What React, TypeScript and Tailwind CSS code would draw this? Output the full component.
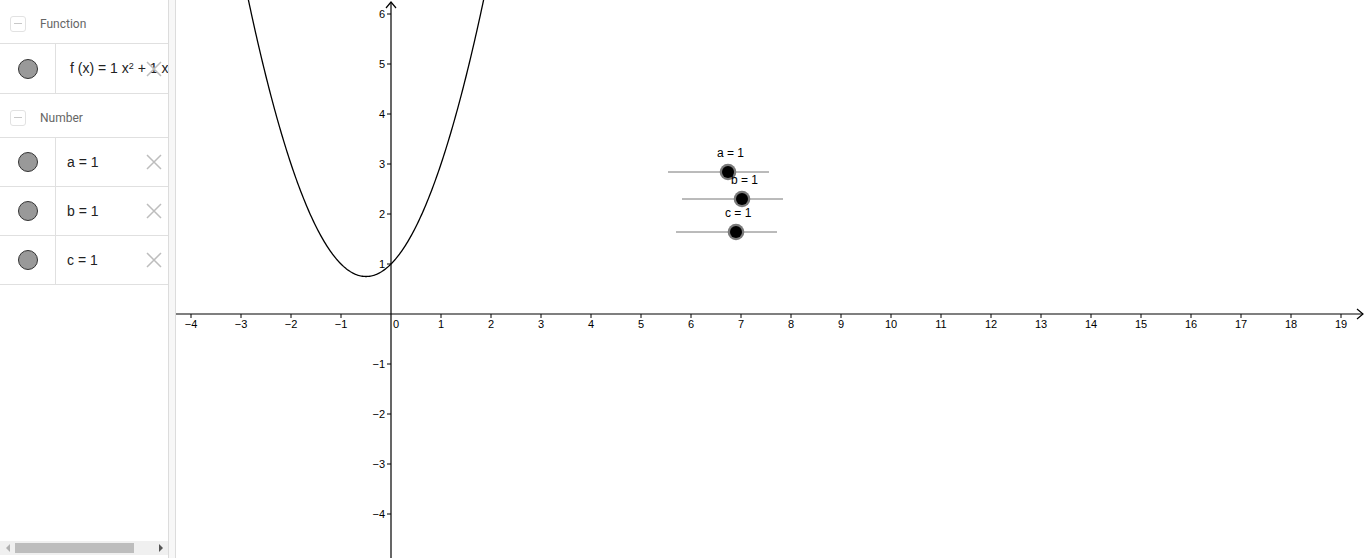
import React from 'react';

const OX = 391;
const OY = 314;
const U = 50;

const f = (x: number) => x * x + x + 1;

function parabolaPath() {
  const pts: string[] = [];
  for (let x = -2.95; x <= 1.95; x += 0.02) {
    const px = OX + x * U;
    const py = OY - f(x) * U;
    pts.push(`${pts.length ? 'L' : 'M'}${px.toFixed(2)},${py.toFixed(2)}`);
  }
  return pts.join(' ');
}

const minus = (n: number) => (n < 0 ? `\u2212${Math.abs(n)}` : `${n}`);

function XIcon() {
  return (
    <svg width="18" height="18" viewBox="0 0 18 18" className="block">
      <path d="M2 2 L16 16 M16 2 L2 16" stroke="#bdbdbd" strokeWidth="1.5" />
    </svg>
  );
}

function Dot() {
  return <div className="w-[20px] h-[20px] rounded-full bg-[#999999] border border-[#333333]" />;
}

function Header({ label }: { label: string }) {
  return (
    <div className="h-[44px] pt-[4px] flex items-center border-b border-[#e0e0e0]">
      <div className="ml-[10px] w-[16px] h-[16px] rounded-[3px] border border-[#e2e2e2] flex items-center justify-center">
        <div className="w-[8px] h-[1.5px] bg-[#c8c8c8]" />
      </div>
      <span className="ml-[14px] text-[12px] text-[#666666]" style={{ fontFamily: 'Roboto, sans-serif' }}>
        {label}
      </span>
    </div>
  );
}

function Row({ children, h = 49, pl = 11 }: { children: React.ReactNode; h?: number; pl?: number }) {
  return (
    <div className="relative flex border-b border-[#e0e0e0]" style={{ height: h }}>
      <div className="w-[56px] shrink-0 flex items-center justify-center border-r border-[#e0e0e0]">
        <Dot />
      </div>
      <div
        className="flex-1 flex items-center overflow-hidden whitespace-nowrap text-[14px] text-[#222222]"
        style={{ fontFamily: '"Liberation Sans", Arial, sans-serif', paddingLeft: pl }}
      >
        {children}
      </div>
      <div className="absolute right-[5px] top-1/2 -translate-y-1/2">
        <XIcon />
      </div>
    </div>
  );
}

function Slider({ x, y, label, lx, ly }: { x: number; y: number; label: string; lx: number; ly: number }) {
  return (
    <g>
      <line x1={x} y1={y} x2={x + 101} y2={y} stroke="#777777" strokeWidth="1" />
      <circle cx={x + 60} cy={y} r="8.3" fill="#7a7a7a" />
      <circle cx={x + 60} cy={y} r="6" fill="#000000" />
      <text x={lx} y={ly} fontSize="12" fill="#000" fontFamily="'Liberation Sans', Arial, sans-serif">
        {label}
      </text>
    </g>
  );
}

function Graph() {
  const xs: number[] = [];
  for (let i = -4; i <= 19; i++) if (i !== 0) xs.push(i);
  const ys: number[] = [];
  for (let j = -4; j <= 6; j++) if (j !== 0) ys.push(j);
  return (
    <svg viewBox="176 0 1190 558" width="1190" height="558" className="block">
      <rect x="176" y="0" width="1190" height="558" fill="#ffffff" />
      <line x1="176" y1={OY} x2="1363" y2={OY} stroke="#000" strokeWidth="1.2" />
      <path d="M1357,309 L1363,314 L1357,319" fill="none" stroke="#000" strokeWidth="1.2" />
      <line x1={OX} y1="2" x2={OX} y2="558" stroke="#000" strokeWidth="1.2" />
      <path d={`M${OX - 5},8 L${OX},2 L${OX + 5},8`} fill="none" stroke="#000" strokeWidth="1.2" />
      <g fontFamily="'Liberation Sans', Arial, sans-serif" fontSize="11" fill="#000">
        {xs.map((i) => (
          <g key={`x${i}`}>
            <line x1={OX + i * U} y1={OY} x2={OX + i * U} y2={OY + 4} stroke="#000" strokeWidth="1" />
            <text x={OX + i * U} y={OY + 14} textAnchor="middle">
              {minus(i)}
            </text>
          </g>
        ))}
        {ys.map((j) => (
          <g key={`y${j}`}>
            <line x1={OX - 4} y1={OY - j * U} x2={OX} y2={OY - j * U} stroke="#000" strokeWidth="1" />
            <text x={OX - 6} y={OY - j * U + 4} textAnchor="end">
              {minus(j)}
            </text>
          </g>
        ))}
        <text x={OX + 2} y={OY + 14}>
          0
        </text>
      </g>
      <path d={parabolaPath()} fill="none" stroke="#000" strokeWidth="1.3" />
      <Slider x={668} y={172} label="a = 1" lx={717} ly={157} />
      <Slider x={682} y={199} label="b = 1" lx={731} ly={184} />
      <Slider x={676} y={232} label="c = 1" lx={725} ly={217} />
    </svg>
  );
}

export default function App() {
  return (
    <div className="w-[1366px] h-[558px] flex bg-white overflow-hidden">
      <div className="w-[168px] shrink-0 flex flex-col bg-white">
        <Header label="Function" />
        <Row h={50} pl={14}>
          <span>
            f (x) = 1 x<sup className="text-[9px]">2</sup> + 1 x + 1
          </span>
        </Row>
        <Header label="Number" />
        <Row>a = 1</Row>
        <Row>b = 1</Row>
        <Row>c = 1</Row>
        <div className="flex-1" />
        <div className="h-[14px] mb-[3px] bg-[#f0f0f0] flex items-center">
          <div className="w-[15px] flex justify-center">
            <div className="w-0 h-0 border-y-[4px] border-y-transparent border-r-[4px] border-r-[#b0b0b0]" />
          </div>
          <div className="w-[119px] h-[10px] bg-[#bdbdbd]" />
          <div className="flex-1" />
          <div className="w-[14px] flex justify-center">
            <div className="w-0 h-0 border-y-[4px] border-y-transparent border-l-[4px] border-l-[#555555]" />
          </div>
        </div>
      </div>
      <div className="w-[8px] shrink-0 bg-[#f7f7f7] border-x border-[#dcdcdc]" />
      <div className="flex-1">
        <Graph />
      </div>
    </div>
  );
}
